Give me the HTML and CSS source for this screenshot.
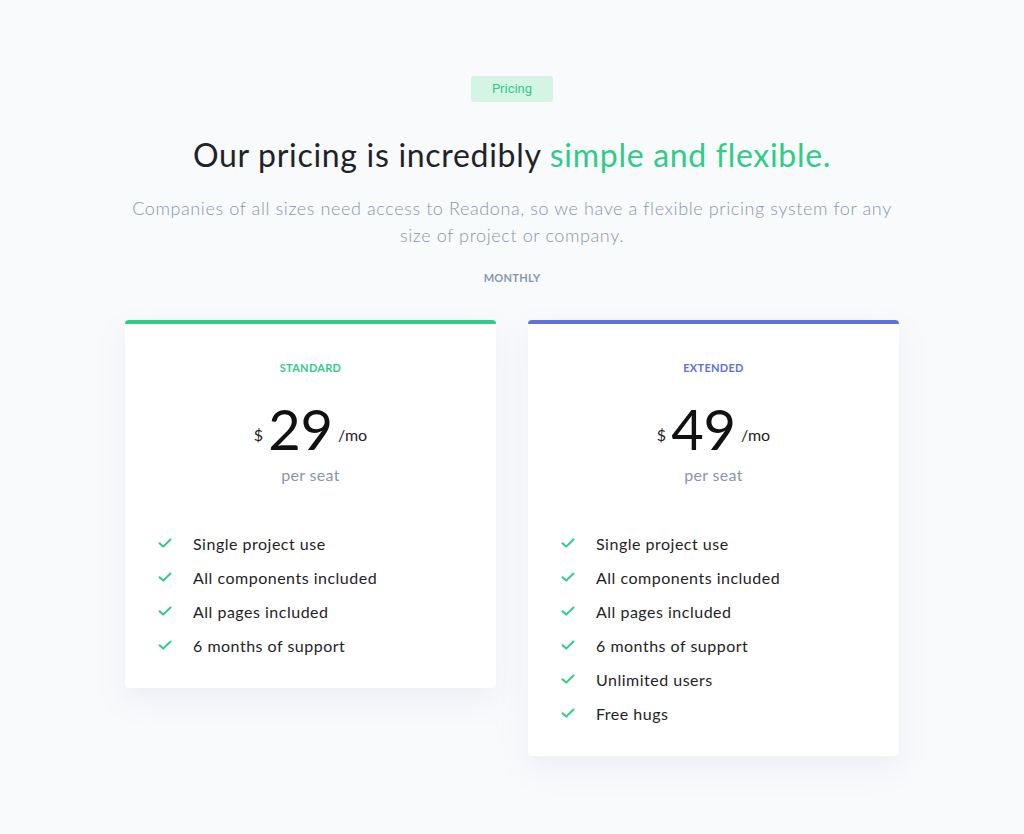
FILE: index.html
```html
<!DOCTYPE html>
<html>
  <head>
    <title>Pricing</title>
    <link rel="stylesheet" href="styles.css">
  </head>
  <body>
    <section class="pricing">
      <span class="badge">Pricing</span>
      <h1 class="title">Our pricing is incredibly <span class="accent">simple and flexible.</span></h1>
      <p class="lead">Companies of all sizes need access to Readona, so we have a flexible pricing system for any size of project or company.</p>
      <div class="period">MONTHLY</div>

      <div class="plans">
        <div class="plan plan-green">
          <div class="plan-name">STANDARD</div>
          <div class="price">
            <span class="currency">$</span>
            <span class="amount">29</span>
            <span class="per">/mo</span>
          </div>
          <div class="seat">per seat</div>
          <ul class="features">
            <li><svg class="check" viewBox="0 0 14 10"><path d="M1.5 5.2 L5.2 8.6 L12.5 1.5"/></svg>Single project use</li>
            <li><svg class="check" viewBox="0 0 14 10"><path d="M1.5 5.2 L5.2 8.6 L12.5 1.5"/></svg>All components included</li>
            <li><svg class="check" viewBox="0 0 14 10"><path d="M1.5 5.2 L5.2 8.6 L12.5 1.5"/></svg>All pages included</li>
            <li><svg class="check" viewBox="0 0 14 10"><path d="M1.5 5.2 L5.2 8.6 L12.5 1.5"/></svg>6 months of support</li>
          </ul>
        </div>

        <div class="plan plan-blue">
          <div class="plan-name">EXTENDED</div>
          <div class="price">
            <span class="currency">$</span>
            <span class="amount">49</span>
            <span class="per">/mo</span>
          </div>
          <div class="seat">per seat</div>
          <ul class="features">
            <li><svg class="check" viewBox="0 0 14 10"><path d="M1.5 5.2 L5.2 8.6 L12.5 1.5"/></svg>Single project use</li>
            <li><svg class="check" viewBox="0 0 14 10"><path d="M1.5 5.2 L5.2 8.6 L12.5 1.5"/></svg>All components included</li>
            <li><svg class="check" viewBox="0 0 14 10"><path d="M1.5 5.2 L5.2 8.6 L12.5 1.5"/></svg>All pages included</li>
            <li><svg class="check" viewBox="0 0 14 10"><path d="M1.5 5.2 L5.2 8.6 L12.5 1.5"/></svg>6 months of support</li>
            <li><svg class="check" viewBox="0 0 14 10"><path d="M1.5 5.2 L5.2 8.6 L12.5 1.5"/></svg>Unlimited users</li>
            <li><svg class="check" viewBox="0 0 14 10"><path d="M1.5 5.2 L5.2 8.6 L12.5 1.5"/></svg>Free hugs</li>
          </ul>
        </div>
      </div>
    </section>
  </body>
</html>
```

FILE: styles.css
```css
body {
  margin: 0;
  background: #f9fafc;
  font-family: "Lato", "Open Sans", sans-serif;
  color: #1f2328;
}

.pricing {
  display: flex;
  flex-direction: column;
  align-items: center;
  padding: 76px 0 60px;
  text-align: center;
}

.badge {
  display: inline-block;
  height: 26px;
  line-height: 26px;
  padding: 0 21px;
  border-radius: 3px;
  background: #d4f5e4;
  color: #2ecc87;
  font-family: "Roboto", sans-serif;
  font-size: 13px;
}

.title {
  margin: 33px 0 0;
  font-size: 32px;
  line-height: 40px;
  font-weight: 400;
  letter-spacing: 0.7px;
  color: #1f2328;
}

.accent { color: #2ecc87; }

.lead {
  max-width: 770px;
  margin: 20px 0 0;
  font-size: 18px;
  line-height: 27px;
  font-weight: 300;
  letter-spacing: 0.6px;
  color: #8796b0;
}

.period {
  margin-top: 21px;
  font-size: 11px;
  line-height: 16px;
  font-weight: 700;
  letter-spacing: 0.3px;
  color: #8796b0;
}

.plans {
  display: flex;
  align-items: flex-start;
  gap: 32px;
  margin-top: 34px;
}

.plan {
  width: 371px;
  box-sizing: border-box;
  padding: 36px 33px 26px;
  background: #fff;
  border-top: 4px solid #2ecc87;
  border-radius: 4px;
  box-shadow: 0 12px 30px rgba(120, 135, 170, 0.1);
}

.plan-blue { border-top-color: #5d72e0; }

.plan-name {
  font-size: 11px;
  line-height: 16px;
  font-weight: 700;
  letter-spacing: 0.3px;
  color: #2ecc87;
}

.plan-blue .plan-name { color: #5d72e0; }

.price {
  display: flex;
  justify-content: center;
  align-items: center;
  gap: 5px;
  margin-top: 25px;
}

.currency, .per {
  padding-top: 10px;
  font-size: 16px;
  color: #1f2328;
}

.amount {
  font-size: 56px;
  line-height: 56px;
  font-weight: 400;
  color: #111;
}

.seat {
  margin-top: 6px;
  font-size: 16px;
  line-height: 24px;
  letter-spacing: 0.3px;
  color: #8796b0;
}

.features {
  list-style: none;
  margin: 39px 0 0;
  padding: 0;
  text-align: left;
}

.features li {
  display: flex;
  align-items: center;
  height: 34px;
  font-size: 16px;
  letter-spacing: 0.5px;
}

.check {
  width: 14px;
  height: 10px;
  margin-right: 21px;
  fill: none;
  stroke: #2ecc87;
  stroke-width: 2;
  stroke-linecap: round;
  stroke-linejoin: round;
}
```
